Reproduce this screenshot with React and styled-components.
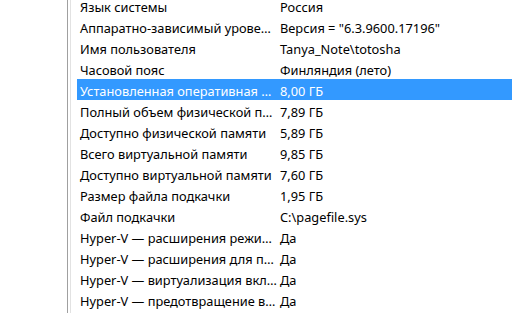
import styled, { createGlobalStyle } from 'styled-components';

const GlobalStyle = createGlobalStyle`
  html, body {
    margin: 0;
    padding: 0;
    background: #ffffff;
    overflow: hidden;
  }
`;

const rows = [
  ["Язык системы", "Россия"],
  ["Аппаратно-зависимый уровень (HAL)", 'Версия = "6.3.9600.17196"'],
  ["Имя пользователя", "Tanya_Note\\totosha"],
  ["Часовой пояс", "Финляндия (лето)"],
  ["Установленная оперативная память (RAM)", "8,00 ГБ"],
  ["Полный объем физической памяти", "7,89 ГБ"],
  ["Доступно физической памяти", "5,89 ГБ"],
  ["Всего виртуальной памяти", "9,85 ГБ"],
  ["Доступно виртуальной памяти", "7,60 ГБ"],
  ["Размер файла подкачки", "1,95 ГБ"],
  ["Файл подкачки", "C:\\pagefile.sys"],
  ["Hyper-V — расширения режима мониторинга виртуальной машины", "Да"],
  ["Hyper-V — расширения для преобразования адресов второго уровня", "Да"],
  ["Hyper-V — виртуализация включена во встроенном ПО", "Да"],
  ["Hyper-V — предотвращение выполнения данных", "Да"],
];

const SELECTED = 4;

function App() {
  return (
    <>
      <GlobalStyle />
      <Page>
        <OuterEdge>
          <InnerEdge>
            <List>
              {rows.map(([name, value], i) => (
                <Row key={i} selected={i === SELECTED}>
                  <NameCell>{name}</NameCell>
                  <ValueCell>{value}</ValueCell>
                </Row>
              ))}
            </List>
          </InnerEdge>
        </OuterEdge>
      </Page>
    </>
  );
}

export default App;

const Page = styled.div`
    width: 512px;
    height: 318px;
    padding-left: 67px;
    box-sizing: border-box;
    overflow: hidden;
    font-family: "Noto Sans", "Open Sans", sans-serif;
    font-size: 12.8px;
    color: #000;
`;

const OuterEdge = styled.div`
    height: 100%;
    border-left: 1px solid #a0a0a0;
    padding-left: 2px;
`;

const InnerEdge = styled.div`
    height: 100%;
    border-left: 1px solid #e2e2e2;
    padding-left: 6px;
`;

const List = styled.div`
    display: flex;
    flex-direction: column;
    margin-top: -5px;
`;

const Row = styled.div`
    display: flex;
    flex-direction: row;
    align-items: center;
    box-sizing: border-box;
    height: 21px;
    padding-top: 2px;
    background-color: ${p => (p.selected ? '#3399ff' : 'transparent')};
    color: ${p => (p.selected ? '#ffffff' : '#000000')};
`;

const NameCell = styled.div`
    width: 197px;
    padding-left: 3px;
    padding-right: 3px;
    white-space: nowrap;
    overflow: hidden;
    text-overflow: ellipsis;
`;

const ValueCell = styled.div`
    white-space: nowrap;
`;
